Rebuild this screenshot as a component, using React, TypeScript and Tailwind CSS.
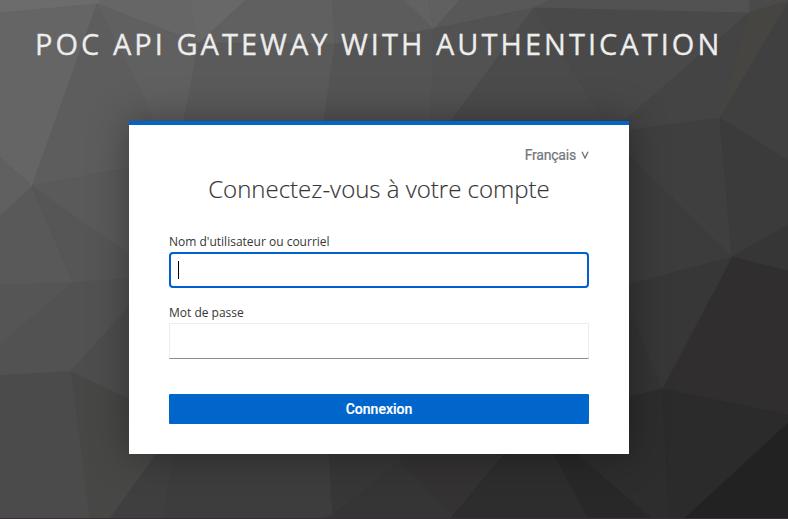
const facets: [string, string][] = [
  ['0,0 102,0 97,4 0,13', '#6c6c6c'],
  ['102,0 246,0 199,43 97,4', '#666666'],
  ['190,0 246,0 199,43', '#686868'],
  ['246,0 333,0 335,44 199,43', '#606060'],
  ['0,13 97,4 32,186 0,158', '#656565'],
  ['97,4 145,100 170,160 32,186', '#5d5d5d'],
  ['97,4 199,43 178,150 166,150 145,100', '#606060'],
  ['199,43 335,44 320,150 178,150', '#5a5a5a'],
  ['333,0 404,0 434,29 335,44', '#5c5c5c'],
  ['404,0 428,0 434,29', '#626262'],
  ['428,0 460,0 434,29', '#606060'],
  ['460,0 551,0 534,8 434,29', '#585858'],
  ['335,44 434,29 430,150 320,150', '#545454'],
  ['434,29 534,8 430,150', '#525252'],
  ['534,8 604,121 620,150 430,150', '#4b4b4b'],
  ['551,0 750,0 749,13 534,8', '#525252'],
  ['534,8 749,13 628,118 604,121', '#494949'],
  ['749,13 720,118 628,131 604,138', '#444444'],
  ['750,0 788,0 788,3 749,13', '#4a4a4a'],
  ['749,13 788,1 788,3 720,118', '#464542'],
  ['788,3 788,161 720,118', '#404040'],
  ['720,118 732,257 600,127 600,134', '#3f3f3f'],
  ['720,118 788,161 788,225 732,257', '#3b3b3b'],
  ['732,257 788,225 788,271', '#363636'],
  ['732,257 788,271 788,415 662,389', '#312e2f'],
  ['600,127 732,257 600,292', '#3c3c3c'],
  ['732,257 662,389 632,315 600,292', '#373737'],
  ['600,292 632,315 662,389 600,404', '#353435'],
  ['662,389 788,415 788,423 684,519 669,519', '#2b2b2b'],
  ['788,423 788,519 684,519', '#222222'],
  ['662,389 669,519 652,519 560,440 600,404', '#2d2d2d'],
  ['560,440 652,519 588,519 546,440', '#282828'],
  ['520,435 546,440 588,519 449,519', '#2d2d2d'],
  ['400,462 403,440 520,435 451,515', '#343233'],
  ['332,515 400,462 451,515 451,519 320,519', '#353535'],
  ['328,440 403,440 400,462 332,515', '#373737'],
  ['177,440 328,440 332,515 320,519 162,519', '#3d3d3d'],
  ['166,440 177,440 162,519 109,519', '#3f3f3f'],
  ['71,371 140,404 166,440 109,519 90,519', '#474746'],
  ['71,371 90,519 0,519 0,375', '#4b4b4b'],
  ['71,371 0,375 0,345 73,282', '#525252'],
  ['73,282 0,285 0,345', '#555555'],
  ['73,282 140,277 140,295 71,371', '#525252'],
  ['140,295 140,404 71,371', '#4d4d4d'],
  ['32,186 73,282 0,285 0,216', '#595959'],
  ['32,186 140,262 140,277 73,282', '#565656'],
  ['32,186 140,166 140,262', '#5a5a5a'],
  ['32,186 0,216 0,158', '#606060'],
];

function Backdrop() {
  return (
    <svg className="absolute inset-0" width="788" height="519" viewBox="0 0 788 519" aria-hidden="true">
      <rect width="788" height="519" fill="#464646" />
      {facets.map(([points, color]) => (
        <polygon key={points} points={points} fill={color} stroke={color} strokeWidth="0.7" />
      ))}
      <rect y="518" width="788" height="1" fill="#383034" />
    </svg>
  );
}

export default function App() {
  return (
    <div className="relative h-[519px] w-[788px] overflow-hidden font-['Open_Sans',sans-serif] text-[#363636]">
      <Backdrop />
      <div className="relative flex flex-col">
        <header className="flex h-[121px] items-start pl-[35px] pt-[24px]">
          <h1 className="whitespace-nowrap text-[29px] leading-[40px] tracking-[3.03px] text-[#ededed] uppercase [-webkit-text-stroke:0.3px_#ededed]">
            POC API Gateway with authentication
          </h1>
        </header>
        <main className="ml-[129px] h-[333px] w-[500px] border-t-4 border-[#0066cc] bg-white px-10 shadow-[0_0_36px_rgba(0,0,0,0.36)]">
          <div className="flex h-[46px] items-start justify-end pt-5">
            <button className="flex items-center gap-[5px] font-[Roboto,sans-serif] text-[14px] leading-5 tracking-[-0.2px] text-[#72767b] [-webkit-text-stroke:0.2px_#72767b]">
              <span>Français</span>
              <svg width="8" height="8" viewBox="0 0 8 8" fill="none" stroke="#72767b" strokeWidth="1.4">
                <path d="M1 0.7 4 7 7 0.7" />
              </svg>
            </button>
          </div>
          <h2 className="text-center text-[24px] leading-[36px] font-light [-webkit-text-stroke:0.15px_#363636]">
            Connectez-vous à votre compte
          </h2>
          <form className="flex flex-col pt-[26px]">
            <label className="h-[19px] text-[12px] leading-[18px]">Nom d'utilisateur ou courriel</label>
            <div className="flex h-9 items-center rounded-[4px] border-2 border-[#0060cf] bg-white pl-[7px]">
              <span className="h-[18px] w-px bg-black" />
            </div>
            <label className="mt-4 h-[19px] text-[12px] leading-[18px]">Mot de passe</label>
            <div className="h-9 border border-[#ededed] border-b-[#8a8d90] bg-white" />
            <button
              type="button"
              className="mt-[35px] h-[30px] rounded-[1px] bg-[#0066cc] font-[Roboto,sans-serif] text-[14px] font-medium tracking-[0px] text-white [-webkit-text-stroke:0.2px_#ffffff]"
            >
              Connexion
            </button>
          </form>
        </main>
      </div>
    </div>
  );
}
